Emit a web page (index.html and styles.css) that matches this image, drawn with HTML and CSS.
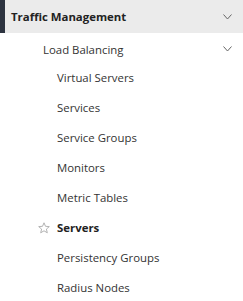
FILE: index.html
```html
<!DOCTYPE html>
<html lang="en">
<head>
    <meta charset="UTF-8">
    <title>Navigation</title>
    <link rel="stylesheet" href="styles.css">
</head>
<body>
    <div class="nav">
        <div class="group-head">
            <span>Traffic Management</span>
            <svg class="chevron" width="9" height="6" viewBox="0 0 9 6"><path d="M0.5 0.5 L4.5 5 L8.5 0.5" fill="none" stroke="#666" stroke-width="1"/></svg>
        </div>
        <div class="sub-head">
            <span>Load Balancing</span>
            <svg class="chevron" width="9" height="6" viewBox="0 0 9 6"><path d="M0.5 0.5 L4.5 5 L8.5 0.5" fill="none" stroke="#666" stroke-width="1"/></svg>
        </div>
        <ul class="items">
            <li>Virtual Servers</li>
            <li>Services</li>
            <li>Service Groups</li>
            <li>Monitors</li>
            <li>Metric Tables</li>
            <li class="active">
                <svg class="star" width="12" height="12" viewBox="0 0 12 12"><path d="M6 0.8 L7.5 4.3 L11.3 4.6 L8.4 7.1 L9.3 10.8 L6 8.8 L2.7 10.8 L3.6 7.1 L0.7 4.6 L4.5 4.3 Z" fill="none" stroke="#aaa" stroke-width="0.9" stroke-linejoin="round"/></svg>
                Servers
            </li>
            <li>Persistency Groups</li>
            <li>Radius Nodes</li>
        </ul>
    </div>
</body>
</html>
```

FILE: styles.css
```css
body
{
    margin: 0;
    font-family: "Open Sans", sans-serif;
    font-size: 11.4px;
    color: #333;
    background: #fff;
}
.nav
{
    width: 243px;
}
.group-head
{
    display: flex;
    align-items: center;
    justify-content: space-between;
    height: 33px;
    padding: 0 11px 0 6px;
    border-left: 5px solid #2d3340;
    background: #ebebeb;
    font-weight: bold;
    color: #222;
}
.sub-head
{
    display: flex;
    align-items: center;
    justify-content: space-between;
    height: 32px;
    padding: 0 11px 0 43px;
}
.items
{
    list-style: none;
    margin: 0;
    padding: 0;
}
.items li
{
    position: relative;
    height: 30px;
    line-height: 26px;
    padding-left: 57px;
}
.items li.active
{
    font-weight: bold;
    color: #222;
}
.star
{
    position: absolute;
    left: 38px;
    top: 7px;
}
```
